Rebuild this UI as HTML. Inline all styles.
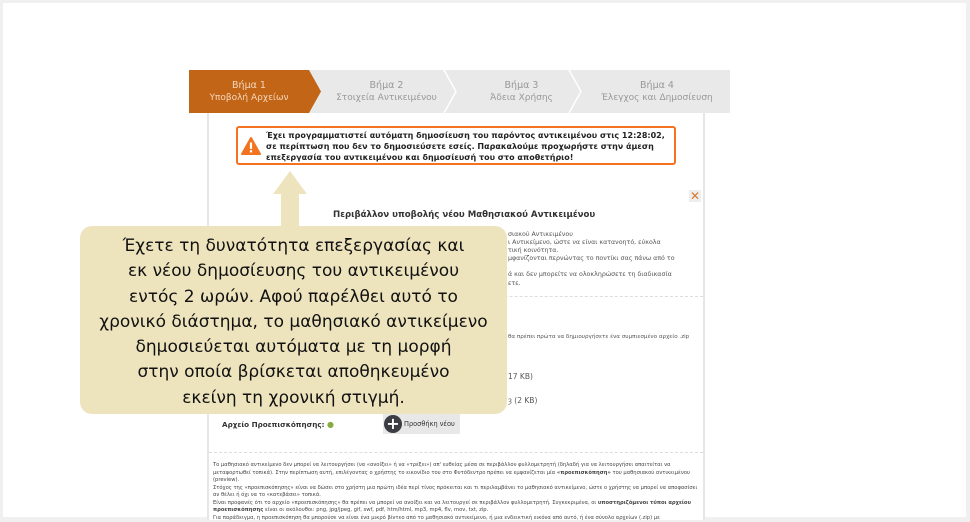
<!DOCTYPE html>
<html><head><meta charset="utf-8"><style>
*{margin:0;padding:0;box-sizing:border-box}
body{width:970px;height:520px;background:#f0f0f0;position:relative;overflow:hidden;font-family:"DejaVu Sans","Liberation Sans",sans-serif}
.frame{position:absolute;left:3px;top:3px;width:963px;height:514px;background:#fff}
.col{position:absolute;left:207px;top:113px;width:498px;height:407px;border-left:2px solid #e6e6e6;border-right:2px solid #e6e6e6;background:#fff}
.steps{position:absolute;left:189px;top:70px;width:541px;height:43px;background:#e9e9e9}
.st{position:absolute;top:0;height:43px;text-align:center;font-size:9px;line-height:12px;color:#999;padding-top:10px;white-space:nowrap}
.st b{font-weight:normal;display:block;font-size:9.5px}
.alert{position:absolute;left:236px;top:126px;width:440px;height:39px;border:2px solid #f37321;border-radius:3px;background:#fff}
.alert p{position:absolute;left:28px;top:2px;font-size:8px;font-weight:bold;line-height:11px;color:#222;white-space:nowrap}
.sm{position:absolute;font-size:6.3px;color:#555;white-space:nowrap;line-height:9px}
.callout{position:absolute;left:80px;top:226px;width:427px;height:188px;background:#ede4bd;border-radius:12px;text-align:center;font-size:17px;line-height:25.3px;color:#111;padding-top:8px;white-space:nowrap}
.dash{position:absolute;left:209px;width:494px;border-top:1px dashed #ddd}
</style></head><body>
<div class="frame"></div>
<div class="col"></div>
<div class="steps">
<svg width="541" height="43" style="position:absolute;left:0;top:0">
<polygon points="0,0 120,0 132,21.5 120,43 0,43" fill="#c26516"/>
<polyline points="255,0 267,21.5 255,43" fill="none" stroke="#fff" stroke-width="1.5"/>
<polyline points="380,0 392,21.5 380,43" fill="none" stroke="#fff" stroke-width="1.5"/>
</svg>
<div class="st" style="left:0;width:120px;color:#f4d8bf"><b>Βήμα 1</b>Υποβολή Αρχείων</div>
<div class="st" style="left:135px;width:125px"><b>Βήμα 2</b>Στοιχεία Αντικειμένου</div>
<div class="st" style="left:270px;width:125px"><b>Βήμα 3</b>Άδεια Χρήσης</div>
<div class="st" style="left:395px;width:146px"><b>Βήμα 4</b>Έλεγχος και Δημοσίευση</div>
</div>
<div class="alert">
<svg width="20" height="18" style="position:absolute;left:3px;top:9px"><path d="M10 1 L19 17 L1 17 Z" fill="#f37321" stroke="#f37321" stroke-linejoin="round" stroke-width="2"/><rect x="8.9" y="5.5" width="2.2" height="6.5" fill="#fff"/><rect x="8.9" y="13.2" width="2.2" height="2.2" fill="#fff"/></svg>
<p>Έχει προγραμματιστεί αυτόματη δημοσίευση του παρόντος αντικειμένου στις 12:28:02,<br>σε περίπτωση που δεν το δημοσιεύσετε εσείς. Παρακαλούμε προχωρήστε στην άμεση<br>επεξεργασία του αντικειμένου και δημοσίευσή του στο αποθετήριο!</p>
</div>
<svg width="36" height="56" style="position:absolute;left:272px;top:171px"><polygon points="18,0 35,23 27,23 27,56 9,56 9,23 1,23" fill="#ede4bd"/></svg>
<div style="position:absolute;left:689px;top:190px;width:12px;height:12px;background:#eee;color:#d8782a;font-size:12px;line-height:12px;text-align:center;font-weight:bold">✕</div>
<div style="position:absolute;left:333px;top:210px;font-size:8.6px;font-weight:bold;color:#333;white-space:nowrap">Περιβάλλον υποβολής νέου Μαθησιακού Αντικειμένου</div>
<div class="sm" style="left:508px;top:230px">σιακού Αντικειμένου</div>
<div class="sm" style="left:508px;top:238px">ι Αντικείμενο, ώστε να είναι κατανοητό, εύκολα</div>
<div class="sm" style="left:508px;top:246px">τική κοινότητα.</div>
<div class="sm" style="left:508px;top:254px">μφανίζονται περνώντας το ποντίκι σας πάνω από το</div>
<div class="sm" style="left:508px;top:270px">ά και δεν μπορείτε να ολοκληρώσετε τη διαδικασία</div>
<div class="sm" style="left:508px;top:279px">ετε.</div>
<div class="dash" style="top:296px"></div>
<div class="sm" style="left:508px;top:333px;font-size:5.6px">θα πρέπει πρώτα να δημιουργήσετε ένα συμπιεσμένο αρχείο .zip</div>
<div class="sm" style="left:508px;top:372px;font-size:7.5px">17 KB)</div>
<div class="sm" style="left:508px;top:396px;font-size:7.5px">ȝ (2 KB)</div>
<div style="position:absolute;left:222px;top:420px;font-size:7.2px;font-weight:bold;color:#333;white-space:nowrap">Αρχείο Προεπισκόπησης: <span style="color:#8a4;font-size:8px">●</span></div>
<div style="position:absolute;left:383px;top:414px;width:77px;height:20px;background:#e8e8e8;font-size:6.6px;color:#333;line-height:20px;padding-left:21px;white-space:nowrap">
<span style="position:absolute;left:1px;top:1px;width:18px;height:18px;border-radius:50%;background:#3a3e44;color:#fff;font-size:16px;line-height:17px;text-align:center;font-weight:bold">+</span>Προσθήκη νέου</div>
<div class="dash" style="top:452px"></div>
<div class="sm" style="left:213px;top:462px;font-size:5.2px;line-height:7.5px;color:#444;white-space:normal;width:490px">Το μαθησιακό αντικείμενο δεν μπορεί να λειτουργήσει (να «ανοίξει» ή να «τρέξει») απ' ευθείας μέσα σε περιβάλλον φυλλομετρητή (δηλαδή για να λειτουργήσει απαιτείται να μεταφορτωθεί τοπικά). Στην περίπτωση αυτή, επιλέγοντας ο χρήστης το εικονίδιο του στο Φυτόδεντρο πρέπει να εμφανίζεται μία <b>«προεπισκόπηση»</b> του μαθησιακού αντικειμένου (preview).<br>Στόχος της «προεπισκόπησης» είναι να δώσει στο χρήστη μια πρώτη ιδέα περί τίνος πρόκειται και τι περιλαμβάνει το μαθησιακό αντικείμενο, ώστε ο χρήστης να μπορεί να αποφασίσει αν θέλει ή όχι να το «κατεβάσει» τοπικά.<br>Είναι προφανές ότι το αρχείο «προεπισκόπησης» θα πρέπει να μπορεί να ανοίξει και να λειτουργεί σε περιβάλλον φυλλομετρητή. Συγκεκριμένα, οι <b>υποστηριζόμενοι τύποι αρχείου προεπισκόπησης</b> είναι οι ακόλουθοι: png, jpg/jpeg, gif, swf, pdf, htm/html, mp3, mp4, flv, mov, txt, zip.<br>Για παράδειγμα, η προεπισκόπηση θα μπορούσε να είναι ένα μικρό βίντεο από το μαθησιακό αντικείμενο, ή μια ενδεικτική εικόνα από αυτό, ή ένα σύνολο αρχείων (.zip) με</div>
<div class="callout">Έχετε τη δυνατότητα επεξεργασίας και<br>εκ νέου δημοσίευσης του αντικειμένου<br>εντός 2 ωρών. Αφού παρέλθει αυτό το<br>χρονικό διάστημα, το μαθησιακό αντικείμενο<br>δημοσιεύεται αυτόματα με τη μορφή<br>στην οποία βρίσκεται αποθηκευμένο<br>εκείνη τη χρονική στιγμή.</div>
</body></html>
